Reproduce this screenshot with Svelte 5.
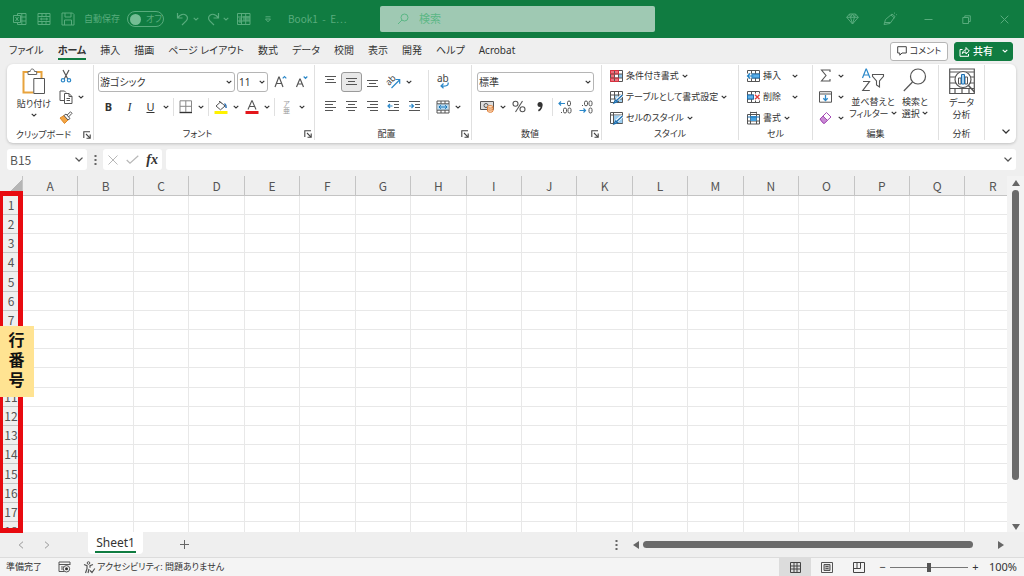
<script lang="ts">
  type Icon = { w: number; h: number; body: string };

  const lines = (rows: [number, number, number][], color = '#555') =>
    rows.map(([x1, x2, y]) => `<path d="M${x1} ${y}H${x2}" stroke="${color}"/>`).join('');

  const tableBase = '<path d="M.5 1.5h12v11H.5zM.5 5h12M.5 9h12M4.5 1.5v11M8.5 1.5v11" stroke="#555"/>';

  const icons: Record<string, Icon> = {
    chevron: { w: 6, h: 4, body: '<path d="M.7.8L3 3 5.3.8" stroke="currentColor" stroke-width="1.1"/>' },
    chevronBig: { w: 8, h: 5, body: '<path d="M.5.6L4 4 7.5.6" stroke="currentColor" stroke-width="1.3"/>' },
    prev: { w: 6, h: 8, body: '<path d="M5 .7L1.2 4 5 7.3" stroke="currentColor"/>' },
    next: { w: 6, h: 8, body: '<path d="M1 .7L4.8 4 1 7.3" stroke="currentColor"/>' },
    excel: { w: 14, h: 14, body: '<path d="M4.5 3.5v-2H13v11H4.5v-2M7.5 5H13M7.5 9H13M8.8 1.5v11M.5 3.5h7v7h-7zM2.500 5l3 4M5.500 5l-3 4" stroke="currentColor"/>' },
    touch: { w: 14, h: 14, body: '<path d="M1 1.500h12v11H1zM1 4.500h12M1 9.500h12M5 1.500v3M9 1.500v3M5 9.500v3M9 9.500v3M3.500 7h7M5 5.800L3.500 7 5 8.200M9 5.800L10.500 7 9 8.200" stroke="currentColor"/>' },
    save: { w: 14, h: 14, body: '<path d="M1 1h10.500L13 2.500V13H1zM4 1v4h6V1M3.500 13V8h7v5" stroke="currentColor"/>' },
    undo: { w: 14, h: 14, body: '<path d="M1.500 1v5h5M1.500 6C4 2.500 7.500 1.500 10 3.200c2 1.500 1.800 4 .2 5.600L6 13" stroke="currentColor" stroke-width="1.2"/>' },
    redo: { w: 14, h: 14, body: '<path d="M12.500 1v5h-5M12.500 6C10 2.500 6.500 1.500 4 3.200c-2 1.500-1.800 4-.2 5.600L8 13" stroke="currentColor" stroke-width="1.2"/>' },
    sheetPic: { w: 14, h: 14, body: '<path d="M.5 1.500h12.500v11H.5zM.5 5h12.500M.5 9h12.500M4.500 1.500v11M8.700 1.500v11" stroke="currentColor"/><path d="M6 4h7v5H6z" fill="currentColor" opacity=".6"/><path d="M2 6h3v5H2z" fill="currentColor" opacity=".6"/>' },
    overflow: { w: 8, h: 7, body: '<path d="M1.500.8h5M1.500 3h5L4 5.800z" stroke="currentColor"/>' },
    search: { w: 12, h: 12, body: '<path d="M1 11l4-4" stroke="currentColor"/><circle cx="7.500" cy="4.500" r="3.500" stroke="currentColor"/>' },
    diamond: { w: 13, h: 12, body: '<path d="M3.500 1h6L12.300 4.300 6.500 11 .7 4.300zM.7 4.300h11.600M3.500 1l1 3.300L6.500 11l2-6.700 1-3.300M4.500 4.300L6.500 1l2 3.300" stroke="currentColor"/>' },
    pen: { w: 14, h: 14, body: '<path d="M1 12.500l1.500-5L9 2l3 2.500-5 7zM2 10.500h5.500M8 3l3.500 3M11 1.500l1-.8M13 3l.8-.5" stroke="currentColor"/>' },
    minimize: { w: 9, h: 9, body: '<path d="M.5 4.500h8" stroke="currentColor"/>' },
    restore: { w: 9, h: 9, body: '<path d="M.8 2.500h5.700v6H.8zM2.800 2.300V.8h5.500v5.700H6.700" stroke="currentColor"/>' },
    close: { w: 9, h: 9, body: '<path d="M.7.7l7.600 7.600M8.300.7L.7 8.300" stroke="currentColor"/>' },
    comment: { w: 10, h: 10, body: '<path d="M.7.7h8.600v6.300H5L2.800 9.200V7H.7z" stroke="#444"/>' },
    share: { w: 11, h: 11, body: '<path d="M3.500 3.500H1v6.800h8.500V8M3.300 7.500C3.800 5 5.300 4 7 4V1.500L10.300 5 7 8V6C5.500 6 4.300 6.500 3.300 7.500z" stroke="#fff"/>' },
    paste: { w: 24, h: 27, body: '<path d="M7 4H1.500v20.500h10M14 4h5.500v6" stroke="#e8a33d" stroke-width="2"/><path d="M6 6.500V3.500h2.200C8.300 1.800 9.200 1 10.300 1s2 .8 2.200 2.500h2.200v3z" stroke="#666" fill="#fff"/><path d="M11.800 10.500h10.700v15H11.800z" stroke="#555" fill="#fff"/>' },
    cut: { w: 12, h: 14, body: '<path d="M3 1l4.800 9M9 1L4.200 10" stroke="#555" stroke-width="1.2"/><circle cx="3" cy="11.300" r="1.700" stroke="#2b88c9" stroke-width="1.200"/><circle cx="9" cy="11.300" r="1.700" stroke="#2b88c9" stroke-width="1.200"/>' },
    copy: { w: 14, h: 14, body: '<path d="M5 10.500H1V1h4.500l1.500 1.500" stroke="#555"/><path d="M5.500 3.500h4.500l3 3v7H5.500zM10 3.500v3h3M7.500 8.500h3.500M7.500 10.500h3.500" stroke="#555" fill="#fff"/>' },
    painter: { w: 14, h: 13, body: '<path d="M1 7l4-2.500 4 4.500-3.500 3.500z" fill="#f3a544" stroke="#dd8a2c"/><path d="M5 4.500l2-1.500 4 4.500-2 1.500zM8 4.200L11.500.8l1.500 1.500-3.500 3.700" stroke="#555" fill="#fff"/>' },
    launcher: { w: 8, h: 8, body: '<path d="M7 .8H.8V7M3 3l3.800 3.800M7.200 3.500v3.700H3.500" stroke="#444" stroke-width="1.100"/>' },
    borders: { w: 14, h: 14, body: '<path d="M1 .8h11.500v11M1 .8v11M6.800.8v11M1 6.300h11.500" stroke="#888"/><path d="M.5 12.500h12.500" stroke="#333" stroke-width="1.400"/>' },
    fill: { w: 14, h: 14, body: '<path d="M2 6l4.500-4 4.500 4-4.500 3.800zM5 1l2.500 2.500" stroke="#555"/><path d="M10.500 3.500c1.500 1 1.800 2.500 1.600 4.500" stroke="#2b6fb3" stroke-width="1.500"/><path d="M.5 11h13v3H.5z" fill="#fff200"/>' },
    fontColor: { w: 14, h: 14, body: '<path d="M3 9.500L6.800.8h.4L11 9.500M4.300 6.500h5.400" stroke="#555" stroke-width="1.100"/><path d="M.5 11h13v3H.5z" fill="#e3161b"/>' },
    grow: { w: 13, h: 13, body: '<path d="M1 12L4.800 2h.4L9 12M2.500 8.500h5" stroke="#555" stroke-width="1.200"/><path d="M8.700 3.300l1.800-1.800 1.800 1.800" stroke="#2b88c9" stroke-width="1.200"/>' },
    shrink: { w: 13, h: 13, body: '<path d="M1.500 12L4.800 4h.4L8.500 12M2.800 9h4.400" stroke="#555" stroke-width="1.200"/><path d="M8.700 1.500l1.800 1.800 1.800-1.800" stroke="#2b88c9" stroke-width="1.200"/>' },
    alignTop: { w: 13, h: 13, body: lines([[1, 12, 1.5], [3, 10, 4.5], [1, 12, 7.5]]) },
    alignMiddle: { w: 13, h: 13, body: lines([[1, 12, 3.5], [3, 10, 6.5], [1, 12, 9.5]]) },
    alignBottom: { w: 13, h: 13, body: lines([[1, 12, 5.5], [3, 10, 8.5], [1, 12, 11.5]]) },
    left: { w: 13, h: 13, body: lines([[1, 12, 1.5], [1, 9, 4.5], [1, 12, 7.5], [1, 9, 10.5]]) },
    center: { w: 13, h: 13, body: lines([[1, 12, 1.5], [3, 10, 4.5], [1, 12, 7.5], [3, 10, 10.5]]) },
    right: { w: 13, h: 13, body: lines([[1, 12, 1.5], [4, 12, 4.5], [1, 12, 7.5], [4, 12, 10.5]]) },
    outdent: { w: 13, h: 13, body: lines([[1, 12, 1.5], [7, 12, 4.5], [7, 12, 7.5], [1, 12, 10.5]]) + '<path d="M1 6h4.500M3 4L1 6l2 2" stroke="#2b88c9" stroke-width="1.200"/>' },
    indent: { w: 13, h: 13, body: lines([[1, 12, 1.5], [7, 12, 4.5], [7, 12, 7.5], [1, 12, 10.5]]) + '<path d="M1 6h4.500M3.500 4l2 2-2 2" stroke="#2b88c9" stroke-width="1.200"/>' },
    rotate: { w: 15, h: 14, body: '<text x="0" y="8" font-size="9" fill="#444" transform="rotate(-45 5 6)">ab</text><path d="M5.500 13l8-8M9.500 4.500h4.200v4.200" stroke="#2b88c9" stroke-width="1.200"/>' },
    wrap: { w: 14, h: 14, body: '<text x="1" y="7" font-size="10" fill="#444">ab</text><path d="M12 7.500c1 3-2 4-6.500 3.500M7.500 8.500L5 11l2.500 2.300" stroke="#2b88c9" stroke-width="1.200"/>' },
    merge: { w: 14, h: 14, body: '<path d="M1 1h12v12H1z" fill="#fff" stroke="#555"/><path d="M1.500 4h11v6h-11z" fill="#b9dcf3"/><path d="M1 3.800h12M1 10.200h12M5 1v2.800M9 1v2.800M5 10.200V13M9 10.200V13" stroke="#555"/><path d="M3 7h8M4.800 5.200L3 7l1.800 1.800M9.200 5.200L11 7 9.200 8.800" stroke="#1474b8"/>' },
    currency: { w: 15, h: 13, body: '<path d="M.5 1.500h13v8H.5z" stroke="#555" fill="#ddd"/><circle cx="6" cy="5.500" r="2" stroke="#555"/><path d="M7.500 7c0-2 5.500-2 5.500 0v4c0 1.700-5.500 1.700-5.500 0z" fill="#fbe0c4" stroke="#e0803a"/><path d="M7.500 7c0 1.500 5.500 1.500 5.500 0M7.500 9c0 1.500 5.500 1.500 5.500 0" stroke="#e0803a"/>' },
    percent: { w: 14, h: 13, body: '<circle cx="3.500" cy="3.800" r="2.500" stroke="#555" stroke-width="1.100"/><circle cx="10.500" cy="9.200" r="2.500" stroke="#555" stroke-width="1.100"/><path d="M10.500 1L3.500 12" stroke="#555" stroke-width="1.100"/>' },
    comma: { w: 8, h: 13, body: '<circle cx="4" cy="4.500" r="2.500" fill="#333"/><path d="M5.600 4.500c.3 3-1 5-3.200 6.300" stroke="#333" stroke-width="1.600"/>' },
    decUp: { w: 14, h: 14, body: '<path d="M1 3.500h6M3 1.500l-2 2 2 2" stroke="#2b88c9" stroke-width="1.200"/><rect x="9.500" y="1" width="3" height="4.800" rx="1.500" stroke="#555"/><rect x="5.500" y="8" width="3" height="5" rx="1.500" stroke="#555"/><rect x="10" y="8" width="3" height="5" rx="1.500" stroke="#555"/><path d="M3 12.500h1" stroke="#555"/>' },
    decDown: { w: 14, h: 14, body: '<rect x="5.500" y="1" width="3" height="4.800" rx="1.500" stroke="#555"/><rect x="10" y="1" width="3" height="4.800" rx="1.500" stroke="#555"/><path d="M3 5.500h1" stroke="#555"/><path d="M.5 10.500h6M4.500 8.500l2 2-2 2" stroke="#2b88c9" stroke-width="1.200"/><rect x="10" y="8" width="3" height="5" rx="1.500" stroke="#555"/>' },
    condFormat: { w: 13, h: 14, body: '<path d="M.5 1.500h8V5h-8zM.5 5h4v4h-4zM.5 9h8v3.500h-8z" fill="#f0707c"/><path d="M8.500 5h4v4h-4z" fill="#8fc4ea"/>' + tableBase + '<path d="M.5 1.500h8V5h-8zM.5 9h8v3.500h-8z" stroke="#d8303f"/>' },
    tableFormat: { w: 13, h: 14, body: '<path d="M4.500 5h8v7.500h-8z" fill="#a7d3f0"/>' + tableBase + '<path d="M5 11.500L12.500 5" stroke="#fff" stroke-width="3"/><path d="M6 11l6.500-6M4 13l1.500-3 2 1.500z" stroke="#1c6fb0" stroke-width="1.300"/>' },
    cellStyle: { w: 13, h: 14, body: '<path d="M.5 1.500h12v11H.5zM.5 4h12M3.500 1.500v11" stroke="#555"/><path d="M4 4.500h8.500V12H4z" fill="#9ccdf0"/><path d="M5 11.500L12.500 5" stroke="#fff" stroke-width="3"/><path d="M6 11l6.500-6M4 13l1.500-3 2 1.500z" stroke="#1c6fb0" stroke-width="1.300"/>' },
    insertCells: { w: 13, h: 14, body: tableBase + '<path d="M4.500 5h8v4h-8z" fill="#5eb1e8" stroke="#1c6fb0"/><path d="M0 4.500h4.500v5H0z" fill="#fff"/><path d="M.5 7h6M3 4.500L.5 7 3 9.500" stroke="#1c7fc4" stroke-width="1.200"/>' },
    deleteCells: { w: 13, h: 14, body: tableBase + '<path d="M.5 5h6v4h-6z" fill="#5eb1e8" stroke="#1c6fb0"/><path d="M7 3.500h6v7H7z" fill="#fff"/><path d="M8 4.800l4.500 4.500M12.500 4.800L8 9.300" stroke="#e03a3a" stroke-width="1.300"/>' },
    formatCells: { w: 13, h: 14, body: '<path d="M.5 3.500h12v9.500H.5zM.5 10h12M3.500 3.500V13M9.500 3.500V13M3.500.8v2M9.500.8v2M3.500 1.500h6" stroke="#555"/><path d="M3.500 5h6v5h-6z" fill="#45a3e2"/><path d="M.5 6h12" stroke="#1c6fb0"/>' },
    sum: { w: 11, h: 13, body: '<path d="M10 3V1H1.500L6 6.500 1.500 12H10v-2" stroke="#555" stroke-width="1.100"/>' },
    fillDown: { w: 13, h: 12, body: '<path d="M.5.700h12v10.500H.5zM.5 3h12" stroke="#555"/><path d="M6.500 4v5.500M4.300 7.300l2.200 2.200 2.200-2.200" stroke="#2b88c9" stroke-width="1.300"/>' },
    eraser: { w: 13, h: 13, body: '<path d="M1 8l6.500-6.500L12 6l-6.500 6H4.200z" stroke="#a44bb5" fill="#fff"/><path d="M1 8l3-3 4.500 4.500-3 2.700H4.200z" fill="#c98ad4" stroke="#a44bb5"/>' },
    sortFilter: { w: 24, h: 24, body: '<path d="M1.500 10L5 1h.4L9 10M2.800 7h4.800" stroke="#2b88c9" stroke-width="1.200"/><path d="M2 13.500h6.500L1.800 22.500h7" stroke="#555" stroke-width="1.200"/><path d="M11.500 6.500h11v1.800L18.500 13v6l-3-2v-4l-4-4.700z" stroke="#555" stroke-width="1.100"/>' },
    find: { w: 24, h: 24, body: '<circle cx="15" cy="8.500" r="7.500" stroke="#555" stroke-width="1.200"/><path d="M9.500 14L.8 23" stroke="#555" stroke-width="1.200"/>' },
    analyze: { w: 26, h: 27, body: '<path d="M.7 1h24.600v24.500H.7zM.7 4h24.600M.7 20.500h24.600M6 20.500v5M13 20.500v5M20 20.500v5M.7 9h24.600M.7 15h24.600" stroke="#555" stroke-width="1.200"/><circle cx="14" cy="11.500" r="8" fill="#fff" stroke="#555" stroke-width="1.200"/><path d="M19.500 17.500l6 6.500" stroke="#555" stroke-width="1.500"/><path d="M9.500 10h2.500v6H9.500zM16 9h2.500v7H16z" fill="#fff" stroke="#555"/><path d="M12.500 6.500h3V16h-3z" fill="#a7d3f0" stroke="#1c6fb0"/>' },
    cancel: { w: 10, h: 10, body: '<path d="M.5.5l9 9M9.500.5l-9 9" stroke="#b8b8b8"/>' },
    accept: { w: 13, h: 9, body: '<path d="M.7 5L4 8.200 12.300.7" stroke="#b8b8b8" stroke-width="1.200"/>' },
    dots: { w: 3, h: 10, body: '<path d="M.5 1h2M.5 5h2M.5 9h2" stroke="#666" stroke-width="2"/>' },
    plus: { w: 9, h: 9, body: '<path d="M0 4.500h9M4.500 0v9" stroke="#666"/>' },
    up: { w: 8, h: 6, body: '<path d="M4 0l4 6H0z" fill="#666"/>' },
    down: { w: 8, h: 6, body: '<path d="M4 6l4-6H0z" fill="#666"/>' },
    arrowLeft: { w: 6, h: 8, body: '<path d="M0 4l6-4v8z" fill="#666"/>' },
    arrowRight: { w: 6, h: 8, body: '<path d="M6 4L0 0v8z" fill="#666"/>' },
    macro: { w: 13, h: 12, body: '<path d="M12 4V1H1v9.500h5M1 3.500h11M3 6h3M3 8h2" stroke="#555"/><circle cx="8.500" cy="7.800" r="3.200" stroke="#555"/><circle cx="8.500" cy="7.800" r="1.500" fill="#333"/>' },
    a11y: { w: 12, h: 13, body: '<circle cx="5.500" cy="2" r="1.300" stroke="#555"/><path d="M1 3.500l3 1.200v3L2.500 12M10 3.500L7 4.700v2M6 8l-1 4M7 9.500l2 2 2.800-4" stroke="#555" stroke-width="1.200"/>' },
    normalView: { w: 11, h: 11, body: '<path d="M.5.5h10v10H.5zM.5 4h10M.5 7h10M4 .5v10M7 .5v10" stroke="#444"/>' },
    pageView: { w: 12, h: 11, body: '<path d="M3 2.500h6v6H3z" fill="#bbb"/><path d="M.5.500h11v10H.5zM3 2.500h6v6H3zM4.500 4.500h3M4.500 6.500h3" stroke="#555"/>' },
    breakView: { w: 12, h: 11, body: '<path d="M.5.500h11v10H.5zM.5 6.500h7v-6M4 .5v6" stroke="#444"/>' }
  };

  const tabs = ['ファイル', 'ホーム', '挿入', '描画', 'ページ レイアウト', '数式', 'データ', '校閲', '表示', '開発', 'ヘルプ', 'Acrobat'];
  const columns = 'ABCDEFGHIJKLMNOPQR'.split('');
  const rows = Array.from({ length: 18 }, (_, i) => i + 1);

  let activeTab = $state('ホーム');
  let autoSave = $state(false);
  let cellRef = $state('B15');
  let formula = $state('');
  let zoom = $state(50);
</script>

{#snippet icon(name: string)}
  {@const i = icons[name]}
  <svg width={i.w} height={i.h} viewBox="0 0 {i.w} {i.h}" fill="none" aria-hidden="true">{@html i.body}</svg>
{/snippet}

{#snippet tool(name: string, label: string, pressed = false)}
  <button class="tool" class:pressed aria-label={label}>{@render icon(name)}</button>
{/snippet}

{#snippet drop(label: string)}
  <button class="drop" aria-label={label}>{@render icon('chevron')}</button>
{/snippet}

{#snippet caption(text: string, launcher = true)}
  <div class="caption">
    <span>{text}</span>
    {#if launcher}
      <button class="launcher" aria-label="{text}の設定">{@render icon('launcher')}</button>
    {/if}
  </div>
{/snippet}

<div class="app">
  <header class="titlebar">
    <div class="quick">
      <button class="quick-btn" aria-label="Excel">{@render icon('excel')}</button>
      <button class="quick-btn" aria-label="タッチ">{@render icon('touch')}</button>
      <button class="quick-btn" aria-label="上書き保存">{@render icon('save')}</button>
      <label class="autosave">
        自動保存
        <input type="checkbox" role="switch" bind:checked={autoSave} />
        <span class="switch"><i></i>{autoSave ? 'オン' : 'オフ'}</span>
      </label>
      <button class="history" aria-label="元に戻す">{@render icon('undo')}{@render icon('chevron')}</button>
      <button class="history" aria-label="やり直し">{@render icon('redo')}{@render icon('chevron')}</button>
      <button class="quick-btn" aria-label="図">{@render icon('sheetPic')}</button>
      <button class="quick-btn" aria-label="カスタマイズ">{@render icon('overflow')}</button>
      <span class="doc">Book1&nbsp; -&nbsp; E⋯</span>
    </div>
    <label class="search">
      {@render icon('search')}
      <input type="search" placeholder="検索" aria-label="検索" />
    </label>
    <div class="window">
      <button aria-label="Premium">{@render icon('diamond')}</button>
      <button aria-label="ペン">{@render icon('pen')}</button>
      <button aria-label="最小化">{@render icon('minimize')}</button>
      <button aria-label="元のサイズに戻す">{@render icon('restore')}</button>
      <button aria-label="閉じる">{@render icon('close')}</button>
    </div>
  </header>

  <nav class="tabs">
    {#each tabs as tab}
      <button class="tab" class:active={tab === activeTab} onclick={() => (activeTab = tab)}>{tab}</button>
    {/each}
    <div class="actions">
      <button class="comment">{@render icon('comment')}コメント</button>
      <button class="share">{@render icon('share')}共有<span class="share-drop">{@render icon('chevron')}</span></button>
    </div>
  </nav>

  <div class="ribbon">
    <section class="group clipboard">
      <div class="content">
        <button class="big">{@render icon('paste')}<span>貼り付け</span>{@render icon('chevron')}</button>
        <div class="stack">
          <div class="row">{@render tool('cut', '切り取り')}</div>
          <div class="row">{@render tool('copy', 'コピー')}{@render drop('コピーのオプション')}</div>
          <div class="row">{@render tool('painter', '書式のコピー')}</div>
        </div>
      </div>
      {@render caption('クリップボード')}
    </section>

    <section class="group font">
      <div class="content two">
        <div class="row">
          <div class="select font-name">
            <select aria-label="フォント"><option>游ゴシック</option></select>
            {@render icon('chevron')}
          </div>
          <div class="select font-size">
            <select aria-label="フォント サイズ"><option>11</option></select>
            {@render icon('chevron')}
          </div>
          {@render tool('grow', 'フォント サイズの拡大')}
          {@render tool('shrink', 'フォント サイズの縮小')}
        </div>
        <div class="row">
          <button class="tool"><b>B</b></button>
          <button class="tool"><i class="italic">I</i></button>
          <button class="tool"><u>U</u></button>
          {@render drop('下線')}
          <span class="sep"></span>
          {@render tool('borders', '罫線')}
          {@render drop('罫線の種類')}
          <span class="sep"></span>
          {@render tool('fill', '塗りつぶしの色')}
          {@render drop('塗りつぶしの色の選択')}
          {@render tool('fontColor', 'フォントの色')}
          {@render drop('フォントの色の選択')}
          <span class="sep"></span>
          <button class="tool ruby" aria-label="ふりがな"><span>ア</span><span>亜</span></button>
          {@render drop('ふりがなの設定')}
        </div>
      </div>
      {@render caption('フォント')}
    </section>

    <section class="group align">
      <div class="content">
        <div class="two">
          <div class="row">
            {@render tool('alignTop', '上揃え')}
            {@render tool('alignMiddle', '上下中央揃え', true)}
            {@render tool('alignBottom', '下揃え')}
            {@render tool('rotate', '方向')}
            {@render drop('方向の選択')}
          </div>
          <div class="row">
            {@render tool('left', '左揃え')}
            {@render tool('center', '中央揃え')}
            {@render tool('right', '右揃え')}
            {@render tool('outdent', 'インデントを減らす')}
            {@render tool('indent', 'インデントを増やす')}
          </div>
        </div>
        <span class="sep tall"></span>
        <div class="two">
          <div class="row">{@render tool('wrap', '折り返して全体を表示する')}</div>
          <div class="row">{@render tool('merge', 'セルを結合して中央揃え')}{@render drop('結合の種類')}</div>
        </div>
      </div>
      {@render caption('配置')}
    </section>

    <section class="group number">
      <div class="content two">
        <div class="row">
          <div class="select format">
            <select aria-label="数値の書式"><option>標準</option></select>
            {@render icon('chevron')}
          </div>
        </div>
        <div class="row">
          {@render tool('currency', '通貨表示形式')}
          {@render drop('通貨の選択')}
          {@render tool('percent', 'パーセント スタイル')}
          {@render tool('comma', '桁区切りスタイル')}
          <span class="sep"></span>
          {@render tool('decUp', '小数点以下の表示桁数を増やす')}
          {@render tool('decDown', '小数点以下の表示桁数を減らす')}
        </div>
      </div>
      {@render caption('数値')}
    </section>

    <section class="group styles">
      <div class="content stack">
        <button class="item">{@render icon('condFormat')}条件付き書式{@render icon('chevron')}</button>
        <button class="item">{@render icon('tableFormat')}テーブルとして書式設定{@render icon('chevron')}</button>
        <button class="item">{@render icon('cellStyle')}セルのスタイル{@render icon('chevron')}</button>
      </div>
      {@render caption('スタイル', false)}
    </section>

    <section class="group cells">
      <div class="content stack">
        <button class="item wide">{@render icon('insertCells')}挿入{@render icon('chevron')}</button>
        <button class="item wide">{@render icon('deleteCells')}削除{@render icon('chevron')}</button>
        <button class="item">{@render icon('formatCells')}書式{@render icon('chevron')}</button>
      </div>
      {@render caption('セル', false)}
    </section>

    <section class="group editing">
      <div class="content">
        <div class="stack">
          <div class="row">{@render tool('sum', 'オート SUM')}{@render drop('関数の選択')}</div>
          <div class="row">{@render tool('fillDown', 'フィル')}{@render drop('フィルの方向')}</div>
          <div class="row">{@render tool('eraser', 'クリア')}{@render drop('クリアの種類')}</div>
        </div>
        <button class="big">
          {@render icon('sortFilter')}
          <span>並べ替えと<br />フィルター {@render icon('chevron')}</span>
        </button>
        <button class="big">
          {@render icon('find')}
          <span>検索と<br />選択 {@render icon('chevron')}</span>
        </button>
      </div>
      {@render caption('編集', false)}
    </section>

    <section class="group analysis">
      <div class="content">
        <button class="big">{@render icon('analyze')}<span>データ<br />分析</span></button>
      </div>
      {@render caption('分析', false)}
    </section>

    <button class="collapse" aria-label="リボンを折りたたむ">{@render icon('chevronBig')}</button>
  </div>

  <div class="formula-bar">
    <div class="name-box">
      <input aria-label="名前ボックス" bind:value={cellRef} />
      {@render icon('chevronBig')}
    </div>
    <span class="grip">{@render icon('dots')}</span>
    <div class="fx">
      <button aria-label="キャンセル">{@render icon('cancel')}</button>
      <button aria-label="入力">{@render icon('accept')}</button>
      <button class="fn" aria-label="関数の挿入">fx</button>
    </div>
    <div class="formula">
      <input aria-label="数式バー" bind:value={formula} />
      {@render icon('chevronBig')}
    </div>
  </div>

  <main class="sheet">
    <div class="grid">
      <table>
        <thead>
          <tr>
            <th class="corner" aria-label="すべて選択"></th>
            {#each columns as column}
              <th scope="col">{column}</th>
            {/each}
          </tr>
        </thead>
        <tbody>
          {#each rows as row}
            <tr>
              <th scope="row">{row}</th>
              {#each columns as _}
                <td></td>
              {/each}
            </tr>
          {/each}
        </tbody>
      </table>
    </div>
    <div class="vscroll">
      {@render icon('up')}
      <div class="track"><div class="thumb"></div></div>
      {@render icon('down')}
    </div>
    <div class="marker"></div>
    <div class="note">行番号</div>
  </main>

  <div class="sheet-bar">
    <button class="nav" aria-label="前のシート">{@render icon('prev')}</button>
    <button class="nav" aria-label="次のシート">{@render icon('next')}</button>
    <button class="sheet-tab"><span>Sheet1</span></button>
    <button class="add" aria-label="新しいシート">{@render icon('plus')}</button>
    <div class="hscroll">
      {@render icon('dots')}
      <div class="bar">
        {@render icon('arrowLeft')}
        <div class="track"><div class="thumb"></div></div>
        {@render icon('arrowRight')}
      </div>
    </div>
  </div>

  <footer class="status">
    <span>準備完了</span>
    <button class="macro" aria-label="マクロの記録">{@render icon('macro')}</button>
    <button class="a11y">{@render icon('a11y')}アクセシビリティ: 問題ありません</button>
    <div class="views">
      <button class="view current" aria-label="標準">{@render icon('normalView')}</button>
      <button class="view" aria-label="ページ レイアウト">{@render icon('pageView')}</button>
      <button class="view" aria-label="改ページ プレビュー">{@render icon('breakView')}</button>
      <button class="step" aria-label="縮小">−</button>
      <input type="range" min="0" max="100" aria-label="ズーム" bind:value={zoom} />
      <button class="step" aria-label="拡大">+</button>
      <span class="percent">{zoom * 2}%</span>
    </div>
  </footer>
</div>

<style>
  :global(body) {
    margin: 0;
    background: #efefef;
  }
  .app {
    display: flex;
    flex-direction: column;
    height: 100vh;
    overflow: hidden;
    color: #333;
    background: #efefef;
    font-family: 'Noto Sans', 'Noto Sans CJK JP', sans-serif;
    font-size: 9px;
    line-height: 12px;
    font-feature-settings: 'palt';
  }
  button,
  input,
  select {
    margin: 0;
    padding: 0;
    border: 0;
    background: none;
    color: inherit;
    font: inherit;
    font-feature-settings: inherit;
    outline: none;
  }
  button {
    display: flex;
    align-items: center;
    justify-content: center;
    white-space: nowrap;
  }
  svg {
    flex: none;
    overflow: visible;
  }

  /* title bar */
  .titlebar {
    display: grid;
    grid-template-columns: 380fr 275fr 369fr;
    align-items: center;
    height: 38px;
    background: #107c41;
    color: #58ac7d;
  }
  .quick {
    display: flex;
    align-items: center;
    padding-left: 8px;
  }
  .quick-btn {
    width: 24px;
    height: 24px;
  }
  .autosave {
    display: flex;
    align-items: center;
    gap: 7px;
    padding: 0 8px 0 4px;
    white-space: nowrap;
  }
  .autosave input {
    position: absolute;
    opacity: 0;
  }
  .switch {
    display: flex;
    align-items: center;
    gap: 5px;
    width: 33px;
    height: 14px;
    padding-left: 2px;
    border: 1px solid #58ac7d;
    border-radius: 8px;
  }
  .switch i {
    width: 11px;
    height: 11px;
    border-radius: 50%;
    background: #74bd94;
  }
  .history {
    gap: 3px;
    width: 30px;
    height: 24px;
  }
  .doc {
    margin-left: 8px;
    font-family: 'Noto Sans CJK JP', sans-serif;
    font-size: 10px;
    white-space: nowrap;
  }
  .search {
    display: flex;
    align-items: center;
    gap: 10px;
    height: 26px;
    padding-left: 17px;
    border-radius: 2px;
    background: #9fc9b3;
    color: #5bb785;
  }
  .search input {
    flex: 1;
    font-size: 11px;
  }
  .search input::placeholder {
    color: #5bb785;
  }
  .window {
    display: flex;
    justify-content: flex-end;
    padding-right: 1px;
  }
  .window button {
    width: 38px;
    height: 38px;
  }

  /* tabs */
  .tabs {
    display: flex;
    align-items: center;
    gap: 14px;
    height: 26px;
    padding: 0 11px 0 9px;
    font-size: 10px;
  }
  .tab {
    height: 18px;
    border-bottom: 2px solid transparent;
  }
  .tab.active {
    border-color: #107c41;
    font-weight: 700;
  }
  .actions {
    display: flex;
    gap: 6px;
    margin-left: auto;
  }
  .comment,
  .share {
    box-sizing: border-box;
    gap: 3px;
    width: 58px;
    height: 19px;
    border: 1px solid #b5b5b5;
    border-radius: 3px;
    background: #fff;
    font-size: 9px;
  }
  .share {
    width: 59px;
    border-color: #107c41;
    background: #107c41;
    color: #fff;
    font-size: 10px;
    font-weight: 500;
  }
  .share-drop {
    display: flex;
    margin-left: 6px;
  }

  /* ribbon */
  .ribbon {
    display: flex;
    flex: none;
    height: 79px;
    margin: 0 8px 0 7px;
    border-radius: 6px;
    background: #fff;
    box-shadow: 0 1px 3px rgba(0, 0, 0, 0.2);
  }
  .group {
    display: flex;
    flex: none;
    flex-direction: column;
    box-sizing: border-box;
    margin: 1px 0 3px;
    border-right: 1px solid #e0e0e0;
  }
  .clipboard {
    width: 87px;
  }
  .font {
    width: 221px;
  }
  .align {
    width: 157px;
  }
  .number {
    width: 130px;
  }
  .styles {
    width: 137px;
  }
  .cells {
    width: 74px;
  }
  .editing {
    width: 126px;
  }
  .analysis {
    width: 46px;
  }
  .content {
    display: flex;
    flex: 1;
    padding-left: 5px;
  }
  .analysis .content {
    padding: 0;
  }
  .font .content {
    padding-left: 4px;
  }
  .styles .content,
  .cells .content {
    padding-left: 8px;
  }
  .row {
    display: flex;
    align-items: center;
  }
  .two {
    display: flex;
    flex-direction: column;
    gap: 4px;
    padding-top: 6px;
  }
  .two .row {
    height: 21px;
  }
  .stack {
    display: flex;
    flex-direction: column;
    align-items: flex-start;
  }
  .stack .row,
  .item {
    height: 21px;
  }
  .tool {
    flex: none;
    box-sizing: border-box;
    width: 21px;
    height: 20px;
    border-radius: 3px;
    font-size: 11px;
  }
  .tool.pressed {
    border: 1px solid #9a9a9a;
    background: #e8e8e8;
  }
  .italic {
    font-family: 'Liberation Serif', serif;
    font-size: 12px;
  }
  .ruby {
    flex-direction: column;
    color: #999;
    font-size: 7px;
    line-height: 7px;
  }
  .drop {
    width: 10px;
    height: 20px;
  }
  .sep {
    width: 1px;
    height: 18px;
    margin: 0 1px 0 2px;
    background: #e0e0e0;
  }
  .sep.tall {
    height: 50px;
    margin: 5px 3px;
  }
  .select {
    position: relative;
    display: flex;
    box-sizing: border-box;
    height: 20px;
    margin-right: 2px;
    border: 1px solid #b5b5b5;
    border-radius: 3px;
    font-size: 10px;
  }
  .select select {
    width: 100%;
    padding-left: 1px;
    appearance: none;
  }
  .select :global(svg) {
    position: absolute;
    top: 7px;
    right: 2px;
    pointer-events: none;
  }
  .font-name {
    width: 137px;
  }
  .font-size {
    width: 31px;
  }
  .format {
    width: 117px;
  }
  .item {
    gap: 3px;
  }
  .item.wide :global(svg:last-child) {
    margin-left: 8px;
  }
  .big {
    flex-direction: column;
    justify-content: flex-start;
    gap: 2px;
    padding-top: 3px;
  }
  .clipboard .big {
    width: 43px;
    gap: 3px;
    padding-left: 1px;
  }
  .clipboard .big,
  .clipboard .stack {
    flex: none;
  }
  .editing .stack {
    width: 35px;
  }
  .editing .content {
    padding-left: 2px;
  }
  .editing .big {
    width: 46px;
    gap: 4px;
  }
  .editing .big :global(span svg) {
    margin-bottom: 2px;
  }
  .editing .big + .big {
    width: 38px;
  }
  .analysis .big {
    width: 100%;
  }
  .caption {
    display: flex;
    align-items: center;
    height: 13px;
  }
  .caption span {
    flex: 1;
    text-align: center;
  }
  .launcher {
    width: 13px;
    height: 13px;
  }
  .collapse {
    align-self: flex-end;
    width: 20px;
    height: 24px;
    margin-left: auto;
  }

  /* formula bar */
  .formula-bar {
    display: flex;
    flex: none;
    height: 21px;
    margin: 6px 8px 6px 7px;
    color: #555;
    font-family: 'Noto Sans CJK JP', sans-serif;
    font-size: 12px;
  }
  .name-box,
  .fx,
  .formula {
    display: flex;
    align-items: center;
    box-sizing: border-box;
    border-radius: 3px;
    background: #fff;
    padding: 0 4px 0 3px;
  }
  .name-box {
    width: 80px;
  }
  .name-box input,
  .formula input {
    flex: 1;
    min-width: 0;
  }
  .grip {
    display: flex;
    align-items: center;
    justify-content: center;
    width: 16px;
  }
  .fx {
    width: 59px;
    margin-right: 4px;
    padding: 0;
  }
  .fx button {
    flex: 1;
  }
  .fx .fn {
    color: #333;
    font-family: 'Liberation Serif', serif;
    font-size: 14px;
    font-style: italic;
    font-weight: 700;
  }
  .formula {
    flex: 1;
  }

  /* grid */
  .sheet {
    position: relative;
    display: flex;
    flex: 1;
    min-height: 0;
  }
  .grid {
    flex: 1;
    min-width: 0;
    overflow: hidden;
    background: #fff;
  }
  table {
    width: calc(100% + 14px);
    table-layout: fixed;
    border-collapse: separate;
    border-spacing: 0;
    font-family: 'Noto Sans CJK JP', sans-serif;
    font-size: 12px;
    line-height: 16px;
  }
  th,
  td {
    box-sizing: border-box;
    height: 19px;
    padding: 0;
    border-right: 1px solid #e8e8e8;
    border-bottom: 1px solid #e8e8e8;
  }
  th {
    border-color: #c4c4c4;
    background: #efefef;
    color: #555;
    font-weight: 400;
  }
  thead th,
  tbody tr:nth-child(5n) th {
    height: 20px;
  }
  .corner {
    width: 23px;
    background: linear-gradient(135deg, #efefef 62%, #b5b5b5 62%);
  }
  .vscroll {
    display: flex;
    flex-direction: column;
    align-items: center;
    gap: 4px;
    width: 17px;
    padding: 4px 0 2px;
    background: #f3f3f3;
  }
  .vscroll .track {
    flex: 1;
    width: 7px;
  }
  .vscroll .thumb {
    height: 88%;
    border-radius: 4px;
    background: #6b6b6b;
  }
  .marker {
    position: absolute;
    top: 15px;
    bottom: -1px;
    left: 0;
    box-sizing: border-box;
    width: 23px;
    border: 5px solid #e80a10;
    border-left-width: 3px;
  }
  .note {
    position: absolute;
    top: 150px;
    left: 0;
    width: 17px;
    padding: 4px 9px 7px 8px;
    background: #ffe392;
    color: #111;
    font-size: 16px;
    font-weight: 700;
    line-height: 20px;
    text-align: center;
    word-break: break-all;
  }

  /* sheet tabs */
  .sheet-bar {
    display: flex;
    flex: none;
    align-items: center;
    height: 25px;
    padding-left: 8px;
    border-bottom: 1px solid #dcdcdc;
    color: #999;
  }
  .nav {
    width: 26px;
    height: 24px;
  }
  .sheet-tab {
    align-self: flex-start;
    width: 55px;
    height: 22px;
    margin-left: 28px;
    border-radius: 0 0 4px 4px;
    background: #fff;
    color: #333;
    font-size: 12px;
  }
  .sheet-tab span {
    padding: 2px 1px 1px;
    border-bottom: 2px solid #107c41;
    line-height: 14px;
  }
  .add {
    width: 30px;
    height: 24px;
    margin-left: 26px;
  }
  .hscroll {
    display: flex;
    align-items: center;
    gap: 15px;
    width: calc(40% + 3px);
    margin-left: auto;
  }
  .bar {
    display: flex;
    flex: 1;
    align-items: center;
    gap: 4px;
    margin-right: 20px;
  }
  .bar .track {
    flex: 1;
  }
  .bar .thumb {
    width: 94%;
    height: 7px;
    border-radius: 4px;
    background: #6b6b6b;
  }

  /* status bar */
  .status {
    display: flex;
    flex: none;
    align-items: center;
    height: 18px;
    padding-left: 6px;
    background: #f4f4f4;
  }
  .macro {
    margin-left: 16px;
  }
  .a11y {
    gap: 2px;
    margin-left: 12px;
  }
  .views {
    display: flex;
    align-items: center;
    margin-left: auto;
    padding-right: 7px;
  }
  .view {
    width: 32px;
    height: 18px;
  }
  .view.current {
    background: #dcdcdc;
  }
  .step {
    width: 15px;
    font-size: 11px;
  }
  .views input {
    width: 78px;
    height: 10px;
    appearance: none;
    background: linear-gradient(#777, #777) center / 100% 1px no-repeat;
  }
  .views input::-webkit-slider-thumb {
    width: 4px;
    height: 9px;
    appearance: none;
    background: #555;
  }
  .percent {
    width: 34px;
    text-align: right;
    font-size: 11px;
  }
</style>
